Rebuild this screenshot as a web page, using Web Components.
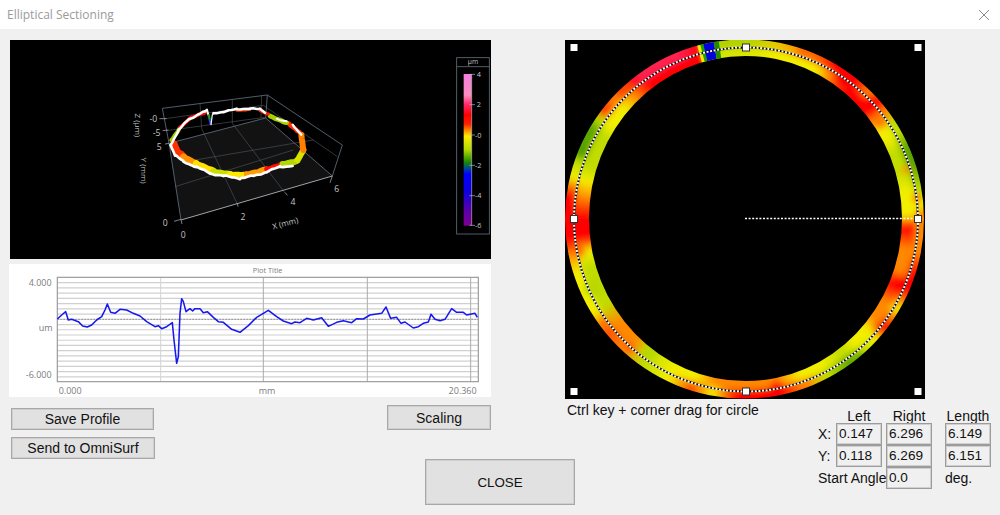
<!DOCTYPE html>
<html>
<head>
<meta charset="utf-8">
<title>Elliptical Sectioning</title>
<style>
  html, body { margin: 0; padding: 0; background: #f0f0f0; }
</style>
</head>
<body>
<app-window></app-window>
<script>
const titleBarTemplate = document.createElement("template");
titleBarTemplate.innerHTML = `
<style>
  :host {
    display: flex;
    justify-content: space-between;
    align-items: center;
    height: 29px;
    background: #fff;
    padding: 0 10px 0 7px;
    box-sizing: border-box;
    font: 12px "Open Sans", sans-serif;
    color: #9b9b9b;
  }
  svg { display: block; }
</style>
<slot></slot>
<svg width="12" height="12" viewBox="0 0 12 12"><path d="M1 1 L11 11 M11 1 L1 11" stroke="#8c8c8c" stroke-width="1" fill="none"/></svg>
`;
class TitleBar extends HTMLElement {
  connectedCallback() {
    if (this.shadowRoot) return;
    this.attachShadow({ mode: "open" }).appendChild(titleBarTemplate.content.cloneNode(true));
  }
}
customElements.define("title-bar", TitleBar);

const winButtonTemplate = document.createElement("template");
winButtonTemplate.innerHTML = `
<style>
  :host {
    display: flex;
    align-items: center;
    justify-content: center;
    box-sizing: border-box;
    background: #e1e1e1;
    border: 1px solid #a8a8a8;
    box-shadow: inset 0 0 0 1px #cfcfcf;
    font: 14px "Liberation Sans", sans-serif;
    color: #111;
  }
</style>
<slot></slot>
`;
class WinButton extends HTMLElement {
  connectedCallback() {
    if (this.shadowRoot) return;
    this.attachShadow({ mode: "open" }).appendChild(winButtonTemplate.content.cloneNode(true));
  }
}
customElements.define("win-button", WinButton);

// 3D view, coordinates below are in 3x units of the screenshot (origin 100,40)
const surfaceTemplate = document.createElement("template");
surfaceTemplate.innerHTML = `
<style>
  :host { display: block; width: 481px; height: 219px; background: #000; }
  svg { display: block; }
  text { font-family: "Open Sans", sans-serif; fill: #c4c4c4; font-size: 26px; }
  .frame { stroke: #5f6c78; stroke-width: 2.6; fill: none; }
  .grid { stroke: #4a525a; stroke-width: 2; fill: none; }
  .band { fill: none; stroke-linecap: round; stroke-linejoin: round; }
  .legend text { font-size: 22px; }
</style>
<svg width="481" height="219" viewBox="-270 0 1443 657">
  <defs>
    <linearGradient id="scale" x1="0" y1="0" x2="0" y2="1">
      <stop offset="0" stop-color="#f47fe0"/>
      <stop offset=".14" stop-color="#ff8cc0"/>
      <stop offset=".2" stop-color="#ff2a6a"/>
      <stop offset=".27" stop-color="#ff0000"/>
      <stop offset=".33" stop-color="#ff2000"/>
      <stop offset=".41" stop-color="#ffee00"/>
      <stop offset=".5" stop-color="#b0d800"/>
      <stop offset=".58" stop-color="#1c8a00"/>
      <stop offset=".62" stop-color="#00508c"/>
      <stop offset=".66" stop-color="#0000ff"/>
      <stop offset=".78" stop-color="#1000e0"/>
      <stop offset=".88" stop-color="#5000b0"/>
      <stop offset="1" stop-color="#800090"/>
    </linearGradient>
    <filter id="soft" x="-5%" y="-5%" width="110%" height="110%"><feGaussianBlur stdDeviation="1.8"/></filter>
  </defs>

  <polygon points="207,310 497,234 697,408 243,540" fill="#121212"/>
  <g class="grid">
    <path d="M195 236 L490 196 L712 350"/>
    <path d="M200 272 L494 232"/>
    <path d="M300 190 L305 266 L412 492"/>
    <path d="M397 180 L397 250 L556 460"/>
    <path d="M485 167 L483 232"/>
    <path d="M262 364 L640 300"/>
    <path d="M225 440 L580 330"/>
  </g>
  <g class="frame">
    <path d="M187 205 L502 165 L727 315 L697 408"/>
    <path d="M187 205 L207 310 L497 234 L502 165"/>
    <path d="M497 234 L697 408"/>
    <path d="M207 310 L243 540"/>
  </g>
  <path d="M243 540 L697 408" stroke="#a8b0b8" stroke-width="2.8" fill="none"/>
  <path d="M222 544 L243 538 M243 540 L246 552 M412 490 L414 500 M556 458 L562 466 M697 408 L690 428 M178 236 L200 236 M188 272 L205 270 M195 312 L208 310" stroke="#a8b0b8" stroke-width="2.2" fill="none"/>

  <g filter="url(#soft)" class="band">
    <path data-pts="214,300 238,266" stroke="#a4cc00" stroke-width="12"/>
    <path data-pts="240,262 268,236 315,218" stroke="#ff1010" stroke-width="11"/>
    <path data-pts="222,312 232,335 250,350" stroke="#ff3000" stroke-width="22"/>
    <path data-pts="250,350 288,370" stroke="#ff9000" stroke-width="20"/>
    <path data-pts="288,370 340,392" stroke="#ffe000" stroke-width="19"/>
    <path data-pts="340,394 390,402" stroke="#c8e000" stroke-width="18"/>
    <path data-pts="390,402 440,404" stroke="#ffe800" stroke-width="17"/>
    <path data-pts="440,402 500,388" stroke="#ff9c00" stroke-width="17"/>
    <path data-pts="500,388 545,372" stroke="#ff1000" stroke-width="15"/>
    <path data-pts="548,372 592,362" stroke="#b4d800" stroke-width="18"/>
    <path data-pts="592,360 610,330" stroke="#d8e400" stroke-width="18"/>
    <path data-pts="610,330 604,284" stroke="#ff8000" stroke-width="18"/>
    <path data-pts="598,276 566,250" stroke="#ff3000" stroke-width="13"/>
    <path data-pts="560,248 510,228" stroke="#a8d000" stroke-width="14"/>
    <path data-pts="505,222 480,212" stroke="#ff2000" stroke-width="9"/>
    <path data-pts="450,208 410,212" stroke="#ff3000" stroke-width="7"/>
    <path stroke="#fff" stroke-width="7.5" data-pts="212,315 235,272 265,238 295,224 316,214"/>
    <path stroke="#fff" stroke-width="7.5" data-pts="340,220 370,215 410,208 450,205 480,208 495,218"/>
    <path stroke="#fff" stroke-width="8" data-pts="212,315 225,345 250,365 290,381 330,400 370,408 420,415 460,408 500,396 540,380 578,378"/>
    <path stroke="#fff" stroke-width="6" data-pts="530,236 560,244"/>
    <path stroke="#fff" stroke-width="7" data-pts="578,254 604,284"/>
    <path stroke="#fff" stroke-width="6" d="M314 214 L321 209 L325 224"/>
    <path stroke="#1c9a20" stroke-width="7" d="M326 226 L329 238"/>
    <path stroke="#3040ff" stroke-width="6" d="M329 240 L332 252"/>
    <path stroke="#fff" stroke-width="3.5" d="M333 254 L337 224 L342 220"/>
  </g>

  <text x="160" y="247" text-anchor="middle">-0</text>
  <text x="170" y="289" text-anchor="middle">-5</text>
  <text x="178" y="330" text-anchor="middle">5</text>
  <text x="196" y="559" text-anchor="middle">0</text>
  <text x="250" y="594" text-anchor="middle">0</text>
  <text x="429" y="541" text-anchor="middle">2</text>
  <text x="579" y="495" text-anchor="middle">4</text>
  <text x="710" y="456" text-anchor="middle">6</text>
  <text transform="translate(558 558) rotate(-15)" text-anchor="middle" style="font-size:24px">X (mm)</text>
  <text transform="translate(104 256) rotate(90)" text-anchor="middle" style="font-size:24px">Z (µm)</text>
  <text transform="translate(122 392) rotate(90)" text-anchor="middle" style="font-size:24px">Y (mm)</text>

  <g class="legend">
    <g class="frame"><rect x="1070" y="53" width="98" height="529"/><path d="M1070 80 H1168"/></g>
    <text x="1119" y="73" text-anchor="middle" style="font-size:20px">µm</text>
    <rect x="1091" y="102" width="24" height="455" fill="url(#scale)"/>
    <path d="M1115 102 V557 M1108 103 H1125 M1108 194 H1125 M1108 285 H1125 M1108 376 H1125 M1108 467 H1125 M1108 556 H1125" stroke="#b8b8b8" stroke-width="2" fill="none"/>
    <text x="1130" y="111">4</text>
    <text x="1130" y="202">2</text>
    <text x="1125" y="293">-0</text>
    <text x="1125" y="384">-2</text>
    <text x="1125" y="475">-4</text>
    <text x="1125" y="565">-6</text>
  </g>
</svg>
`;

// small jitter so the trace looks like measured data
function jagged(pts) {
  const list = pts.trim().split(/\s+/).map((p) => p.split(",").map(Number));
  let d = "", n = 0;
  for (let i = 0; i < list.length - 1; i++) {
    const [x1, y1] = list[i], [x2, y2] = list[i + 1];
    const steps = Math.max(1, Math.round(Math.hypot(x2 - x1, y2 - y1) / 9));
    for (let s = 0; s <= steps; s++) {
      const t = s / steps;
      const j = n === 0 || (i === list.length - 2 && s === steps) ? 0 : 1 * Math.sin(n * 1.9) + 1.4 * Math.sin(n * 0.6);
      d += `${n ? "L" : "M"}${(x1 + (x2 - x1) * t).toFixed(1)} ${(y1 + (y2 - y1) * t + j).toFixed(1)} `;
      n++;
    }
  }
  return d;
}

class SurfaceView extends HTMLElement {
  connectedCallback() {
    if (this.shadowRoot) return;
    const root = this.attachShadow({ mode: "open" });
    root.appendChild(surfaceTemplate.content.cloneNode(true));
    root.querySelectorAll("[data-pts]").forEach((p) => p.setAttribute("d", jagged(p.dataset.pts)));
  }
}
customElements.define("surface-view", SurfaceView);

// profile plot, same 3x units (origin 0,260)
const profilePoints = "172,177 185,165 197,155 205,180 215,178 235,185 248,198 262,201 275,195 290,180 305,170 315,150 322,132 332,157 345,160 360,148 380,150 400,160 420,168 440,185 465,200 475,197 485,206 500,200 517,188 522,240 530,310 535,290 540,160 545,116 550,125 558,155 570,146 578,153 585,146 600,146 610,158 622,155 640,172 655,185 670,187 695,208 720,217 745,197 770,172 805,151 830,170 850,183 875,191 885,186 900,188 920,175 940,180 965,173 985,199 1010,187 1030,182 1055,188 1070,176 1090,177 1110,165 1145,160 1158,141 1172,175 1190,172 1203,190 1215,186 1240,204 1255,200 1270,190 1285,186 1293,163 1305,178 1320,182 1335,178 1355,146 1370,157 1390,157 1400,165 1425,160 1432,172";

class ProfilePlot extends HTMLElement {
  connectedCallback() {
    if (this.shadowRoot) return;
    let hLines = "";
    for (let y = 68; y < 365; y += 15.7) {
      hLines += `<path d="M172 ${y} H1435" stroke="#d0d0d0" stroke-width="3.6"/>`;
    }
    const vLines = [482, 790, 1102, 1412]
      .map((x) => `<path d="M${x} 52 V365" stroke="${x === 482 ? "#d4d4d4" : "#acacac"}" stroke-width="3"/>`)
      .join("");
    this.attachShadow({ mode: "open" }).innerHTML = `
<style>
  :host { display: block; width: 482px; height: 133px; background: #fff; }
  svg { display: block; }
  text { font-family: "Open Sans", sans-serif; fill: #7c7c7c; font-size: 27px; }
</style>
<svg width="482" height="133" viewBox="27 12 1446 399">
  <defs><filter id="soft" x="-2%" y="-10%" width="104%" height="120%"><feGaussianBlur stdDeviation="0.9"/></filter></defs>
  ${hLines}
  ${vLines}
  <path d="M172 178 H1435" stroke="#777" stroke-width="2" stroke-dasharray="5 4"/>
  <rect x="172" y="52" width="1263" height="313" fill="none" stroke="#9c9c9c" stroke-width="3.6"/>
  <polyline filter="url(#soft)" points="${profilePoints}" fill="none" stroke="#1818f0" stroke-width="4.6" stroke-linejoin="round"/>
  <text x="803" y="40" text-anchor="middle" style="font-size:22px">Plot Title</text>
  <text x="155" y="79" text-anchor="end">4.000</text>
  <text x="137" y="214" text-anchor="middle">um</text>
  <text x="155" y="354" text-anchor="end">-6.000</text>
  <text x="176" y="401">0.000</text>
  <text x="801" y="402" text-anchor="middle">mm</text>
  <text x="1430" y="401" text-anchor="end">20.360</text>
</svg>`;
  }
}
customElements.define("profile-plot", ProfilePlot);

// ring map, viewBox uses page coordinates
const R = "#ff0000", O = "#ff8800", Y = "#f2ee00", G = "#c0dc00", D = "#5aa600", P = "#ff2050";
const ringStops = [
  [0, "#b4d200", "#d8e600"], [10, "#e6cc00", Y], [18, O, Y], [25, "#ff5000", Y], [30, R, O], [38, R, R],
  [44, O, R], [48, R, R], [52, O, O], [56, G, Y], [60, G, Y], [66, D, G], [72, D, G], [80, G, Y], [85, Y, Y], [88, O, Y],
  [93, O, R], [100, O, O], [108, R, O], [113, R, R], [120, Y, O], [127, R, O], [132, Y, Y], [138, G, Y],
  [143, D, G], [152, G, Y], [160, O, Y], [168, R, O], [182, R, O], [190, Y, O], [197, "#ff5000", Y], [205, Y, Y],
  [215, G, G], [222, O, O], [230, "#ff5000", O], [238, Y, G], [252, Y, G], [258, O, Y], [263, R, R], [270, R, R],
  [277, R, O], [283, Y, Y], [288, G, G], [293, D, G], [300, D, G], [304, G, Y], [308, "#ff4000", Y], [312, O, Y], [318, R, O],
  [324, P, R], [338, P, R], [345, R, R], [346, "#b4d200", "#d8e600"], [360, "#b4d200", "#d8e600"],
];
const ringBlobs = [
  [803, 52, 6, "#ff6000"], [780, 44, 3, "#ffb000"], [843, 78, 9, R], [870, 105, 9, R], [880, 122, 7, "#ff7a00"],
  [913, 140, 6, "#4a9c00"], [917, 198, 4, R], [906, 170, 4, "#ff9000"], [910, 228, 5, R], [900, 285, 8, R],
  [878, 327, 4, R], [862, 358, 6, "#5aa600"], [807, 384, 4, "#ff7000"], [777, 388, 7, R], [746, 396, 6, R],
  [690, 392, 3, R], [650, 352, 9, "#b8d800"], [630, 348, 5, "#ff5000"], [603, 322, 4, "#ff6000"],
  [593, 288, 9, "#b8d800"], [580, 252, 5, "#ff6000"], [578, 232, 7, R], [582, 152, 6, "#4a9c00"],
  [603, 112, 4, "#ff3000"], [627, 88, 5, "#ff5000"], [660, 62, 7, P],
];

function hexRgb(c) {
  return [1, 3, 5].map((i) => parseInt(c.slice(i, i + 2), 16));
}
function ringColour(a, track) {
  for (let i = 0; i < ringStops.length - 1; i++) {
    const s = ringStops[i], e = ringStops[i + 1];
    if (a >= s[0] && a <= e[0]) {
      const t = (a - s[0]) / (e[0] - s[0]);
      const c1 = hexRgb(s[track]), c2 = hexRgb(e[track]);
      return `rgb(${c1.map((v, k) => Math.round(v + (c2[k] - v) * t)).join(",")})`;
    }
  }
  return Y;
}
function wedge(a1, a2, r1, r2) {
  const cx = 745, cy = 219;
  const p = (a, r) => {
    const t = (a * Math.PI) / 180;
    return `${(cx + r * Math.sin(t)).toFixed(1)},${(cy - r * Math.cos(t)).toFixed(1)}`;
  };
  return `${p(a1, r1)} ${p(a2, r1)} ${p(a2, r2)} ${p(a1, r2)}`;
}

class RingMap extends HTMLElement {
  connectedCallback() {
    if (this.shadowRoot) return;
    let wedges = "";
    for (let a = 0; a < 360; a += 1) {
      wedges += `<polygon points="${wedge(a, a + 1.3, 170, 195)}" fill="${ringColour(a, 1)}"/>`;
      wedges += `<polygon points="${wedge(a, a + 1.3, 140, 170.5)}" fill="${ringColour(a, 2)}"/>`;
    }
    const blobs = ringBlobs.map(([x, y, r, c]) => `<circle cx="${x}" cy="${y}" r="${r}" fill="${c}"/>`).join("");
    // narrow low spot near the top of the ring
    const notch = `
      <polygon points="${wedge(344.6, 346, 140, 195)}" fill="#f2ee00"/>
      <polygon points="${wedge(345.6, 347, 140, 195)}" fill="#20a000"/>
      <polygon points="${wedge(346.6, 350, 140, 195)}" fill="#0000e0"/>
      <polygon points="${wedge(350, 351.6, 140, 195)}" fill="#208c00"/>`;
    const handle = (x, y, edge) =>
      edge
        ? `<rect x="${x - 3.5}" y="${y - 3.5}" width="7" height="7" fill="#fff" stroke="#333" stroke-width="1"/>`
        : `<rect x="${x - 3.5}" y="${y - 3.5}" width="7" height="7" fill="#fff"/>`;
    this.attachShadow({ mode: "open" }).innerHTML = `
<style>
  :host { display: block; width: 360px; height: 359px; background: #000; }
  svg { display: block; }
</style>
<svg width="360" height="359" viewBox="565 40 360 359">
  <defs>
    <clipPath id="band">
      <path clip-rule="evenodd" d="M565 219 a179.5 179.5 0 1 0 359 0 a179.5 179.5 0 1 0 -359 0 Z M589 218.5 a156.5 162.5 0 1 0 313 0 a156.5 162.5 0 1 0 -313 0 Z"/>
    </clipPath>
    <filter id="blur" x="-5%" y="-5%" width="110%" height="110%"><feGaussianBlur stdDeviation="3"/></filter>
    <filter id="thin" x="-5%" y="-5%" width="110%" height="110%"><feGaussianBlur stdDeviation="0.5"/></filter>
  </defs>
  <g clip-path="url(#band)">
    <g filter="url(#blur)">${wedges}${blobs}</g>
    <g filter="url(#thin)">${notch}</g>
  </g>
  <ellipse cx="746" cy="219.5" rx="172" ry="172" fill="none" stroke="#000" stroke-width="2"/>
  <ellipse cx="746" cy="219.5" rx="172" ry="172" fill="none" stroke="#fff" stroke-width="2" stroke-dasharray="2 1.6"/>
  <path d="M745 218.5 H918" stroke="#fff" stroke-width="1.4" stroke-dasharray="2 1.6"/>
  ${handle(574, 47.5)}${handle(918, 47.5)}${handle(574, 391.5)}${handle(918, 391.5)}
  ${handle(746, 47.5, true)}${handle(574, 219, true)}${handle(918, 219, true)}${handle(746, 391.5, true)}
</svg>`;
  }
}
customElements.define("ring-map", RingMap);

const coordTemplate = document.createElement("template");
coordTemplate.innerHTML = `
<style>
  :host {
    display: grid;
    grid-template-columns: 18px 46px 4px 46px 13px 46px;
    grid-template-rows: 14px 22px 22px 22px;
    font: 14px "Liberation Sans", sans-serif;
    color: #111;
    white-space: nowrap;
  }
  .head { text-align: center; line-height: 14px; }
  .label { align-self: center; }
  .box {
    box-sizing: border-box;
    border: 1px solid #9c9c9c;
    box-shadow: inset 0 0 0 1px #d0d0d0;
    padding-left: 2px;
    line-height: 20px;
    font-size: 13.6px;
  }
  .wide { grid-column: 1 / 3; }
  .c2 { grid-column: 2; }
  .c4 { grid-column: 4; }
  .c6 { grid-column: 6; }
</style>
<span class="head c2">Left</span>
<span class="head c4">Right</span>
<span class="head c6">Length</span>
<span class="label" style="grid-column:1">X:</span>
<span class="box c2">0.147</span>
<span class="box c4">6.296</span>
<span class="box c6">6.149</span>
<span class="label" style="grid-column:1">Y:</span>
<span class="box c2">0.118</span>
<span class="box c4">6.269</span>
<span class="box c6">6.151</span>
<span class="label wide">Start Angle</span>
<span class="box c4">0.0</span>
<span class="label c6">deg.</span>
`;
class CoordPanel extends HTMLElement {
  connectedCallback() {
    if (this.shadowRoot) return;
    this.attachShadow({ mode: "open" }).appendChild(coordTemplate.content.cloneNode(true));
  }
}
customElements.define("coord-panel", CoordPanel);

const appTemplate = document.createElement("template");
appTemplate.innerHTML = `
<style>
  :host {
    display: block;
    width: 1000px;
    height: 515px;
    overflow: hidden;
    background: #f0f0f0;
    font: 14px "Liberation Sans", sans-serif;
  }
  .top {
    display: flex;
    padding: 11px 0 0 9px;
  }
  .left { width: 482px; }
  surface-view { margin-left: 1px; }
  profile-plot { margin-top: 5px; }
  ring-map { margin-left: 74px; }
  .bottom {
    display: grid;
    grid-template-columns: 376px 104px 74px 253px 182px;
    grid-template-rows: 60px 56px;
    padding-left: 11px;
  }
  .actions { grid-column: 1; grid-row: 1; }
  .save { width: 143px; height: 22px; margin-top: 9px; }
  .send { width: 144px; height: 22px; margin-top: 7px; }
  .scaling { grid-column: 2; grid-row: 1; height: 25px; margin-top: 6px; }
  .caption { grid-column: 4; grid-row: 1; margin: 3px 0 0 2px; color: #111; white-space: nowrap; }
  coord-panel { grid-column: 5; grid-row: 1 / 3; margin-top: 10px; align-self: start; }
  .close { grid-column: 2 / 5; grid-row: 2; width: 150px; height: 46px; margin-left: 38px; font-size: 13.33px; }
</style>
<title-bar>Elliptical Sectioning</title-bar>
<div class="top">
  <div class="left">
    <surface-view></surface-view>
    <profile-plot></profile-plot>
  </div>
  <ring-map></ring-map>
</div>
<div class="bottom">
  <div class="actions">
    <win-button class="save">Save Profile</win-button>
    <win-button class="send">Send to OmniSurf</win-button>
  </div>
  <win-button class="scaling">Scaling</win-button>
  <div class="caption">Ctrl key + corner drag for circle</div>
  <coord-panel></coord-panel>
  <win-button class="close">CLOSE</win-button>
</div>
`;
class AppWindow extends HTMLElement {
  connectedCallback() {
    if (this.shadowRoot) return;
    this.attachShadow({ mode: "open" }).appendChild(appTemplate.content.cloneNode(true));
  }
}
customElements.define("app-window", AppWindow);
</script>
</body>
</html>
